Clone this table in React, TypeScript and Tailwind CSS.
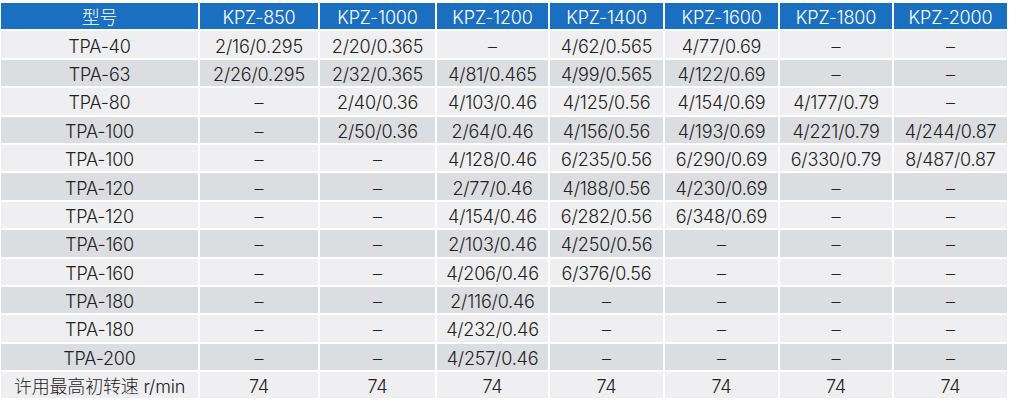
const headers = ['型号', 'KPZ-850', 'KPZ-1000', 'KPZ-1200', 'KPZ-1400', 'KPZ-1600', 'KPZ-1800', 'KPZ-2000'];

const D = '–';

const rows: string[][] = [
  ['TPA-40', '2/16/0.295', '2/20/0.365', D, '4/62/0.565', '4/77/0.69', D, D],
  ['TPA-63', '2/26/0.295', '2/32/0.365', '4/81/0.465', '4/99/0.565', '4/122/0.69', D, D],
  ['TPA-80', D, '2/40/0.36', '4/103/0.46', '4/125/0.56', '4/154/0.69', '4/177/0.79', D],
  ['TPA-100', D, '2/50/0.36', '2/64/0.46', '4/156/0.56', '4/193/0.69', '4/221/0.79', '4/244/0.87'],
  ['TPA-100', D, D, '4/128/0.46', '6/235/0.56', '6/290/0.69', '6/330/0.79', '8/487/0.87'],
  ['TPA-120', D, D, '2/77/0.46', '4/188/0.56', '4/230/0.69', D, D],
  ['TPA-120', D, D, '4/154/0.46', '6/282/0.56', '6/348/0.69', D, D],
  ['TPA-160', D, D, '2/103/0.46', '4/250/0.56', D, D, D],
  ['TPA-160', D, D, '4/206/0.46', '6/376/0.56', D, D, D],
  ['TPA-180', D, D, '2/116/0.46', D, D, D, D],
  ['TPA-180', D, D, '4/232/0.46', D, D, D, D],
  ['TPA-200', D, D, '4/257/0.46', D, D, D, D],
  ['许用最高初转速 r/min', '74', '74', '74', '74', '74', '74', '74'],
];

export default function App() {
  return (
    <div className="w-[1009px] h-[411px] bg-white pl-[1px] pt-[3px] font-['Inter','Noto_Sans_CJK_SC',sans-serif] font-light tracking-[-0.2px]">
      <div className="grid grid-cols-[197px_118px_115px_111px_113px_113px_112px_113px] auto-rows-[26.4px] gap-[2px]">
        {headers.map((h, i) => (
          <div key={i} className="flex items-center justify-center pt-[3px] bg-[#1b6fc1] text-white text-[18px] leading-none">
            {h}
          </div>
        ))}
        {rows.map((r, ri) =>
          r.map((c, ci) => (
            <div
              key={ri + '-' + ci}
              className={
                'flex items-center justify-center pt-[4px] text-[18px] leading-none text-[#222222] ' +
                (ri % 2 === 0 ? 'bg-[#efeff1]' : 'bg-[#dcdde0]')
              }
            >
              {c}
            </div>
          ))
        )}
      </div>
    </div>
  );
}
